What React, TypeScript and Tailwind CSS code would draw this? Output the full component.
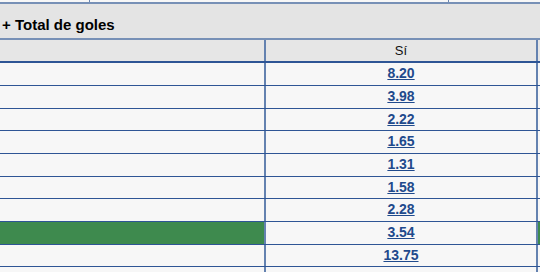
const odds = ["8.20", "3.98", "2.22", "1.65", "1.31", "1.58", "2.28", "3.54", "13.75", ""]

const font = { fontFamily: "'Liberation Sans', Arial, sans-serif" }

export default function App() {
  return (
    <div className="w-[540px] h-[272px] overflow-hidden bg-[#f7f7f7]" style={font}>
      <div className="w-[600px]">
        {/* tail of the table above */}
        <div className="flex h-[2px]">
          <div className="w-[90px] border-r border-[#6a86b0]" />
          <div className="w-[359px] border-r border-[#6a86b0]" />
          <div className="flex-1" />
        </div>

        {/* market title */}
        <div className="h-[38px] border-y-2 border-[#7790b6] bg-[#e4e4e4] pl-[2px] pt-[12px] text-[15px] font-bold leading-[18px] text-black">
          + Total de goles
        </div>

        {/* column header */}
        <div className="flex h-[23.3px] border-b-2 border-[#2e5595] bg-[#e6e6e6] text-[13px] leading-[21px] text-[#111]">
          <div className="w-[266px] border-r-2 border-[#6482b0]" />
          <div className="w-[272px] border-r-2 border-[#6482b0] text-center">Sí</div>
          <div className="flex-1" />
        </div>

        {odds.map((o, i) => {
          const hit = o === "3.54"
          return (
            <div
              key={i}
              className="flex h-[22.7px] border-b border-[#2e5595] shadow-[0_1px_0_#a9b9d3]"
            >
              <div className={`w-[266px] border-r-2 border-[#6482b0] ${hit ? "bg-[#3e8a4e]" : "bg-[#f7f7f7]"}`} />
              <div className="w-[272px] border-r-2 border-[#6482b0] bg-[#f7f7f7] text-center text-[14px] font-bold leading-[20px]">
                {o && (
                  <a href="#" className="text-[#1f4a8c] underline">
                    {o}
                  </a>
                )}
              </div>
              <div className={`flex-1 ${hit ? "bg-[#3e8a4e]" : "bg-[#f7f7f7]"}`} />
            </div>
          )
        })}
      </div>
    </div>
  )
}
